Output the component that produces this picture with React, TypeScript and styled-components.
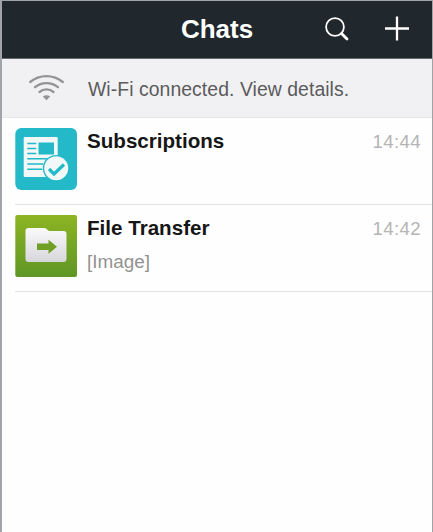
import React from "react";
import styled, { createGlobalStyle } from "styled-components";

const GlobalStyle = createGlobalStyle`
  * { box-sizing: border-box; }
  body { margin: 0; background: #fefefe; font-family: "Liberation Sans", Arial, sans-serif; }
`;

const Screen = styled.main`
  height: 532px;
  border: solid #a0a4a8;
  border-width: 1px 1px 0 2px;
  border-right-color: #a2a2a4;
  background: #fefefe;
  overflow: hidden;
`;

const Header = styled.header`
  height: 58px;
  display: grid;
  grid-template-columns: 1fr auto 1fr;
  align-items: center;
  padding-bottom: 2px;
  background: #20272d;
  border-bottom: 1px solid #64676b;
`;

const Title = styled.h1`
  grid-column: 2;
  margin: 0;
  color: #fff;
  font-size: 26px;
  line-height: 30px;
`;

const Actions = styled.div`
  display: flex;
  justify-content: flex-end;
  align-items: center;
  gap: 36px;
  padding-right: 22px;
`;

const Icon = styled.svg`
  display: block;
  flex: none;
`;

const Notice = styled.div`
  height: 59px;
  display: flex;
  align-items: center;
  gap: 23px;
  padding: 0 0 1px 26px;
  background: #f1f1f3;
  border-bottom: 1px solid #e6e6e8;
  color: #5b5b5c;
  font-size: 19.4px;
  letter-spacing: 0.06px;
  white-space: nowrap;
`;

const NoticeText = styled.span`
  padding-top: 4px;
`;

const ChatRow = styled.article`
  height: 87px;
  margin-left: 13px;
  padding: 10px 11px 0 0;
  display: flex;
  border-bottom: 1px solid #e3e3e4;
`;

const Details = styled.div`
  flex: 1;
  margin-left: 10px;
`;

const Name = styled.h2`
  margin: 0;
  color: #161616;
  font-size: 20.6px;
  line-height: 26px;
  white-space: nowrap;
`;

const Preview = styled.p`
  margin: 9px 0 0;
  color: #929292;
  font-size: 18.9px;
  line-height: 24px;
`;

const Time = styled.time`
  color: #b4b4b4;
  font-size: 18.6px;
  line-height: 27px;
  letter-spacing: 0.4px;
`;

const SearchIcon = () => (
  <Icon width="24" height="24" viewBox="0 0 24 24" fill="none" stroke="#fff">
    <circle cx="10" cy="10" r="8.900" strokeWidth="1.8" />
    <path d="M16.500 16.500L22 22" strokeWidth="2.8" strokeLinecap="round" />
  </Icon>
);

const PlusIcon = () => (
  <Icon width="25" height="25" viewBox="0 0 25 25" fill="none" stroke="#fff" strokeWidth="2.3">
    <path d="M12 .5v24M0 12.500h24" />
  </Icon>
);

const WifiIcon = () => (
  <Icon width="37" height="27" viewBox="0 0 37 27" fill="none" stroke="#949496" strokeWidth="2.300" strokeLinecap="round">
    <path d="M2.2 8C11.5.2 25.500.2 34.800 8" />
    <path d="M7 13.200C13.500 7.700 23.500 7.700 30 13.200" />
    <path d="M11.500 18C15.500 14.600 21.500 14.600 25.500 18" />
    <path d="M14.800 22.500Q18.500 20 22.200 22.500L18.500 26.200Z" fill="#949496" stroke="none" />
  </Icon>
);

const SubscriptionsIcon = () => (
  <Icon width="62" height="62" viewBox="0 0 62 62">
    <rect x=".3" width="61.700" height="62" rx="6" fill="#23b9c9" />
    <rect x="8.700" y="9" width="34" height="40" rx="1" fill="#f2f7f8" />
    <path d="M12.300 15.500h9M12.300 20.500h9M12.300 25.500h9M12.300 30.800h20M12.300 36h16M12.300 41.300h15" stroke="#23b9c9" strokeWidth="1.6" />
    <rect x="23.500" y="14.500" width="15.500" height="12" fill="#23b9c9" />
    <circle cx="41.200" cy="40.300" r="13.400" fill="#23b9c9" />
    <circle cx="41.200" cy="40.300" r="12" fill="#f2f7f8" />
    <path d="M34 41l5 5 10-9.500" fill="none" stroke="#23b9c9" strokeWidth="3.200" />
  </Icon>
);

const TransferIcon = () => (
  <Icon width="62" height="62" viewBox="0 0 62 62">
    <defs>
      <linearGradient id="leaf" x2="0" y2="1">
        <stop stopColor="#8db423" />
        <stop offset="1" stopColor="#5f9625" />
      </linearGradient>
      <linearGradient id="folder" x2="0" y2="1">
        <stop stopColor="#fafafa" />
        <stop offset="1" stopColor="#d7d6dc" />
      </linearGradient>
    </defs>
    <rect x=".3" width="61.700" height="62" rx="2" fill="url(#leaf)" />
    <path d="M10.500 16q0-3 3-3H29q1.500 0 2.500 1l2.500 2h14.500q3 0 3 3v25q0 3-3 3h-35q-3 0-3-3Z" fill="url(#folder)" />
    <path d="M22 28.500h11.500V24.800l8.500 7-8.500 7V35H22Z" fill="#6f9f24" />
  </Icon>
);

const chats = [
  { name: "Subscriptions", time: "14:44", preview: "", Picture: SubscriptionsIcon },
  { name: "File Transfer", time: "14:42", preview: "[Image]", Picture: TransferIcon },
];

export default function App() {
  return (
    <Screen>
      <GlobalStyle />
      <Header>
        <Title>Chats</Title>
        <Actions>
          <SearchIcon />
          <PlusIcon />
        </Actions>
      </Header>
      <Notice>
        <WifiIcon />
        <NoticeText>Wi-Fi connected. View details.</NoticeText>
      </Notice>
      {chats.map(({ name, time, preview, Picture }) => (
        <ChatRow key={name}>
          <Picture />
          <Details>
            <Name>{name}</Name>
            {preview && <Preview>{preview}</Preview>}
          </Details>
          <Time>{time}</Time>
        </ChatRow>
      ))}
    </Screen>
  );
}
